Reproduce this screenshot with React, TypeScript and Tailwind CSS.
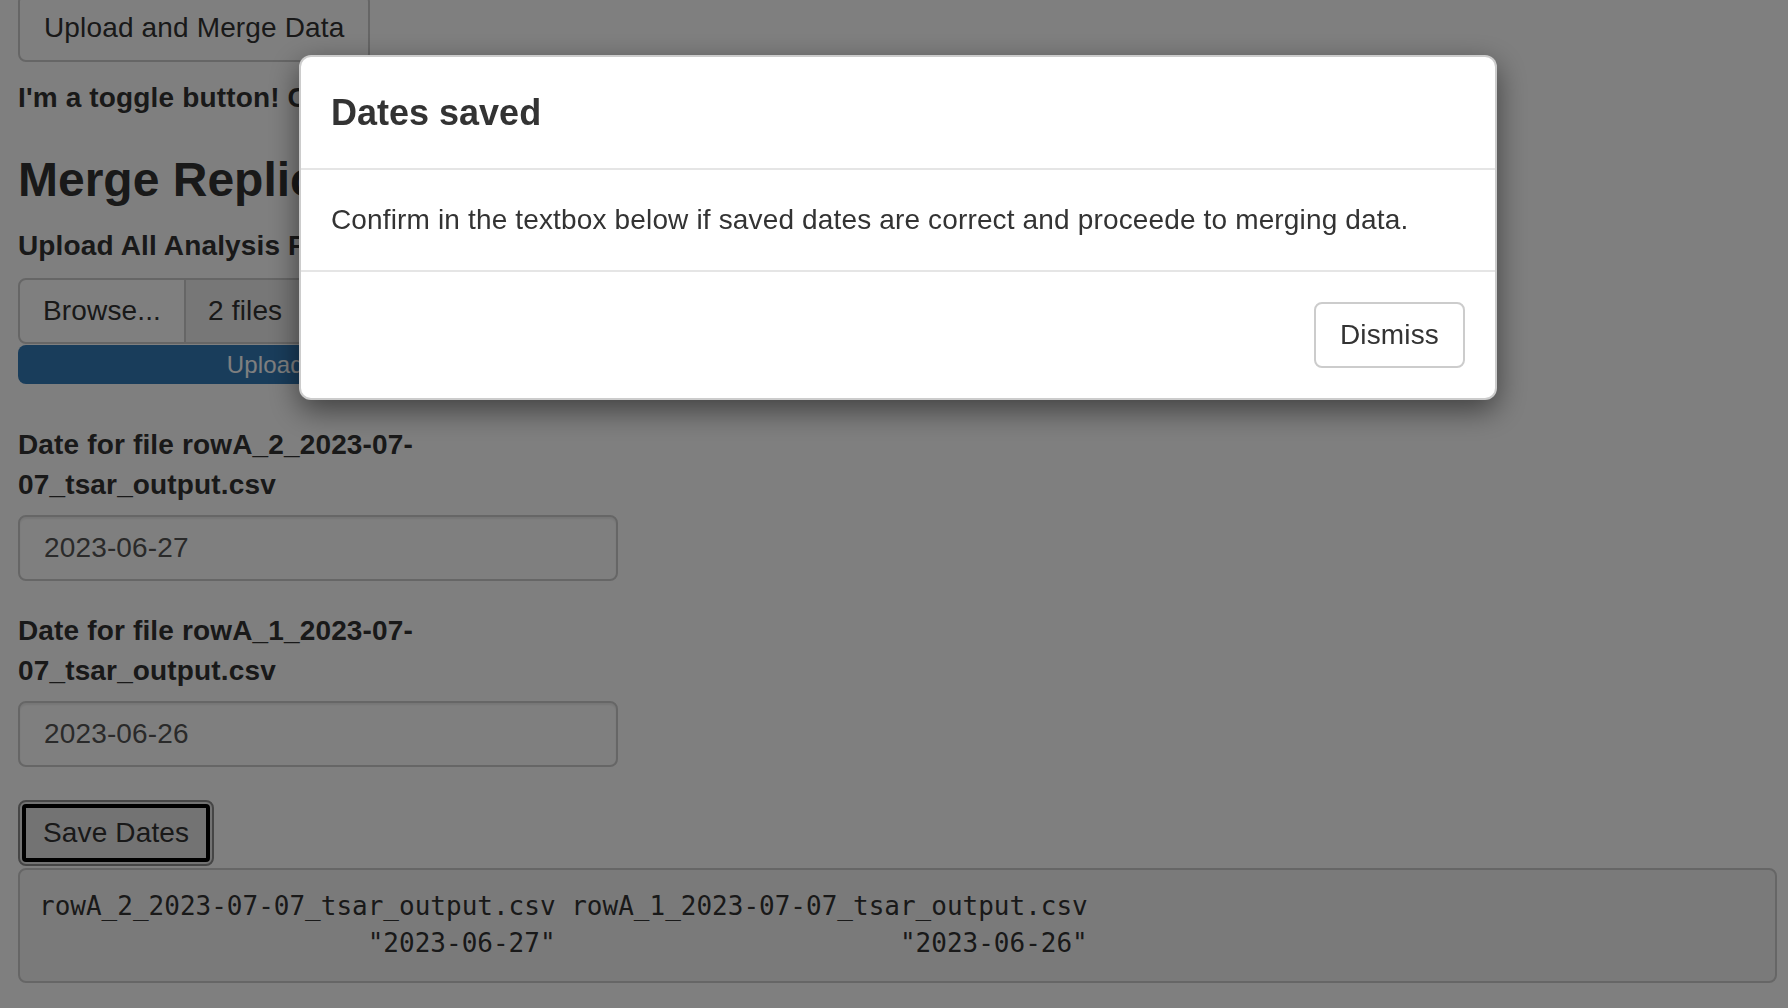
import React from 'react';

const files = [
  { name: 'rowA_2_2023-07-07_tsar_output.csv', date: '2023-06-27' },
  { name: 'rowA_1_2023-07-07_tsar_output.csv', date: '2023-06-26' },
];

const pad = (s: string, n: number) => ' '.repeat(Math.max(n - s.length, 0)) + s;

const App: React.FC = () => {
  const line1 = files.map(f => f.name).join(' ');
  const line2 = files.map(f => pad(`"${f.date}"`, f.name.length)).join(' ');

  return (
    <div className="relative min-h-screen overflow-hidden bg-white font-['Liberation_Sans',Arial,sans-serif] text-[28px] leading-[40px] tracking-[0.15px] text-[#333]">
      {/* Page content under the backdrop */}
      <div className="px-[18px]">
        <button className="-mt-[6px] block h-[68px] rounded-lg border-2 border-[#ccc] bg-white px-[24px] text-[#333]">
          Upload and Merge Data
        </button>

        <div className="mt-[16px] font-bold">I'm a toggle button! Click me to show the instructions.</div>

        <h3 className="mt-[35px] text-[48px] leading-[53px] font-bold tracking-normal">Merge Replicates</h3>

        <div className="mt-[20px] w-[600px]">
          <label className="block font-bold">Upload All Analysis Files</label>
          <div className="mt-[12px] flex h-[66px]">
            <span className="flex items-center rounded-l-lg border-2 border-[#ccc] bg-white px-[23px]">Browse...</span>
            <span className="-ml-[2px] flex flex-1 items-center rounded-r-lg border-2 border-[#ccc] bg-[#eee] px-[22px]">
              2 files
            </span>
          </div>
          <div className="mt-px h-[39px] rounded-lg bg-[#337ab7] text-center text-[24px] leading-[39px] text-white">
            Upload complete
          </div>
        </div>

        {files.map((f, i) => {
          const [head, tail] = f.name.split('-07-07_');
          return (
            <div key={f.name} className={`w-[600px] ${i === 0 ? 'mt-[41px]' : 'mt-[30px]'}`}>
              <label className="block font-bold">
                Date for file {head}-07-<wbr />07_{tail}
              </label>
              <div className="mt-[10px] flex h-[66px] items-center rounded-lg border-2 border-[#ccc] bg-white px-[24px] text-[#555] shadow-[inset_0_2px_2px_rgba(0,0,0,0.075)]">
                {f.date}
              </div>
            </div>
          );
        })}

        <button className="mt-[33px] block h-[66px] rounded-lg border-2 border-[#8c8c8c] bg-[#e6e6e6] px-[23px] text-[#333] outline-4 -outline-offset-[8px] outline-black">
          Save Dates
        </button>

        <pre className="mt-[2px] mr-[-7px] rounded-lg border-2 border-[#ccc] bg-[#f5f5f5] px-[19px] pt-[18px] pb-[19px] font-['DejaVu_Sans_Mono',monospace] text-[26px] leading-[37px] tracking-normal text-[#333]">
          {line1}
          {'\n'}
          {line2}
        </pre>
      </div>

      {/* Backdrop */}
      <div className="fixed inset-0 bg-black/50" />

      {/* Modal */}
      <div className="fixed left-[299px] top-[55px] w-[1198px] rounded-xl border-2 border-black/20 bg-white shadow-[0_10px_30px_rgba(0,0,0,0.5)]">
        <div className="border-b-2 border-[#e5e5e5] p-[30px]">
          <h4 className="text-[36px] leading-[51px] font-bold tracking-normal text-[#333]">Dates saved</h4>
        </div>
        <div className="p-[30px]">
          Confirm in the textbox below if saved dates are correct and proceede to merging data.
        </div>
        <div className="flex justify-end border-t-2 border-[#e5e5e5] p-[30px]">
          <button className="h-[66px] rounded-lg border-2 border-[#ccc] bg-white px-[24px] text-[#333]">Dismiss</button>
        </div>
      </div>
    </div>
  );
};

export default App;
